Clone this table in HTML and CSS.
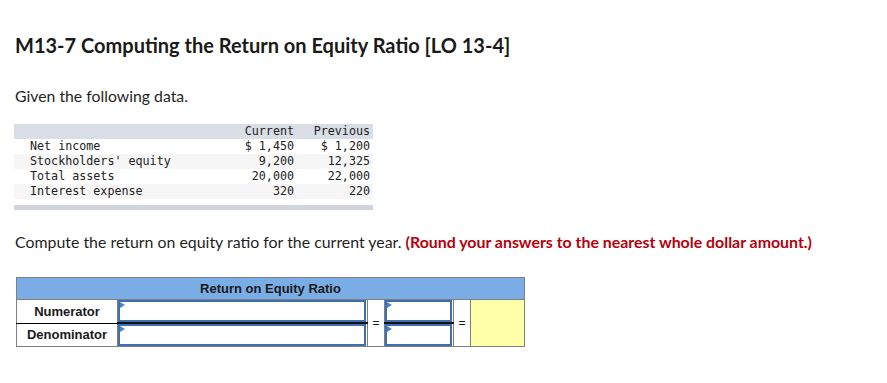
FILE: index.html
```html
<!DOCTYPE html>
<html>
<head>
<meta charset="utf-8">
<link rel="stylesheet" href="styles.css">
</head>
<body>
<div class="page">
  <h1 class="title">M13-7 Computing the Return on Equity Ratio [LO 13-4]</h1>
  <p class="intro">Given the following data.</p>

  <div class="data">
    <div class="data-row head"><span></span><span class="num">Current</span><span class="num last">Previous</span></div>
    <div class="data-row"><span class="lbl">Net income</span><span class="num">$ 1,450</span><span class="num last">$ 1,200</span></div>
    <div class="data-row alt"><span class="lbl">Stockholders' equity</span><span class="num">9,200</span><span class="num last">12,325</span></div>
    <div class="data-row"><span class="lbl">Total assets</span><span class="num">20,000</span><span class="num last">22,000</span></div>
    <div class="data-row alt"><span class="lbl">Interest expense</span><span class="num">320</span><span class="num last">220</span></div>
    <div class="data-foot"></div>
  </div>

  <p class="question">Compute the return on equity ratio for the current year. <strong class="hint">(Round your answers to the nearest whole dollar amount.)</strong></p>

  <table class="ratio">
    <tr class="ratio-head"><th colspan="6">Return on Equity Ratio</th></tr>
    <tr class="r1">
      <td class="lab">Numerator</td>
      <td class="in wide"><div class="box"></div></td>
      <td class="eq" rowspan="2">=</td>
      <td class="in narrow"><div class="box"></div></td>
      <td class="eq" rowspan="2">=</td>
      <td class="res" rowspan="2"></td>
    </tr>
    <tr class="r2">
      <td class="lab">Denominator</td>
      <td class="in wide"><div class="box"></div></td>
      <td class="in narrow"><div class="box"></div></td>
    </tr>
  </table>
</div>
</body>
</html>
```
FILE: styles.css
```css
html, body { margin: 0; padding: 0; background: #fff; }
body { font-family: "Lato", "Open Sans", sans-serif; color: #1f1f1f; }
.page { padding: 33px 0 0 15px; }
.title { margin: 0; font-size: 20px; font-weight: 700; line-height: 24px; color: #1a1a1a; }
.intro { margin: 29px 0 0 0; font-size: 15.8px; line-height: 20px; }

.data { margin: 18px 0 0 -1px; width: 359px; font-family: "DejaVu Sans Mono", "Liberation Mono", monospace; font-size: 11.7px; color: #222; }
.data-row { display: grid; grid-template-columns: 218px 68px 73px; height: 15px; line-height: 15px; }
.data-row.head { background: #d9dde6; }
.data-row.alt { background: #f6f6f6; }
.data-row .lbl { padding-left: 16px; white-space: pre; }
.data-row .num { text-align: right; padding-right: 6px; white-space: pre; }
.data-row .num.last { padding-right: 3px; }
.data-foot { height: 5px; margin-top: 6px; background: #d0d4de; }

.question { margin: 22px 0 0 0; font-size: 15.9px; line-height: 20px; }
.hint { color: #b8000b; font-weight: 700; }

.ratio { margin: 25px 0 0 1px; border-collapse: collapse; font-family: "Liberation Sans", Arial, sans-serif; font-size: 13px; font-weight: 700; color: #1a1a1a; }
.ratio th, .ratio td { border: 1px solid #7f7f7f; padding: 0; }
.ratio-head th { background: #7aade5; height: 21px; text-align: center; font-weight: 700; }
.ratio .lab { width: 100px; height: 22px; text-align: center; }
.ratio .r1 td.lab { border-bottom: 1px solid #000; }
.ratio .r1 td.in { border-bottom: 2px solid #111; }
.ratio .in { padding: 0; vertical-align: top; }
.ratio .wide { width: 249px; }
.ratio .narrow { width: 68px; }
.ratio .box { position: relative; height: 18px; border: 2px solid #3f6fb3; background: #fff; margin: 0 1px 0 0; }
.ratio .box::before { content: ""; position: absolute; left: 0; top: 0; border-left: 5px solid #4a83c9; border-top: 3px solid transparent; border-bottom: 3px solid transparent; }
.ratio .eq { width: 16px; text-align: center; font-weight: 400; font-size: 12px; vertical-align: middle; }
.ratio .res { width: 53px; background: #ffffaa; }
```
